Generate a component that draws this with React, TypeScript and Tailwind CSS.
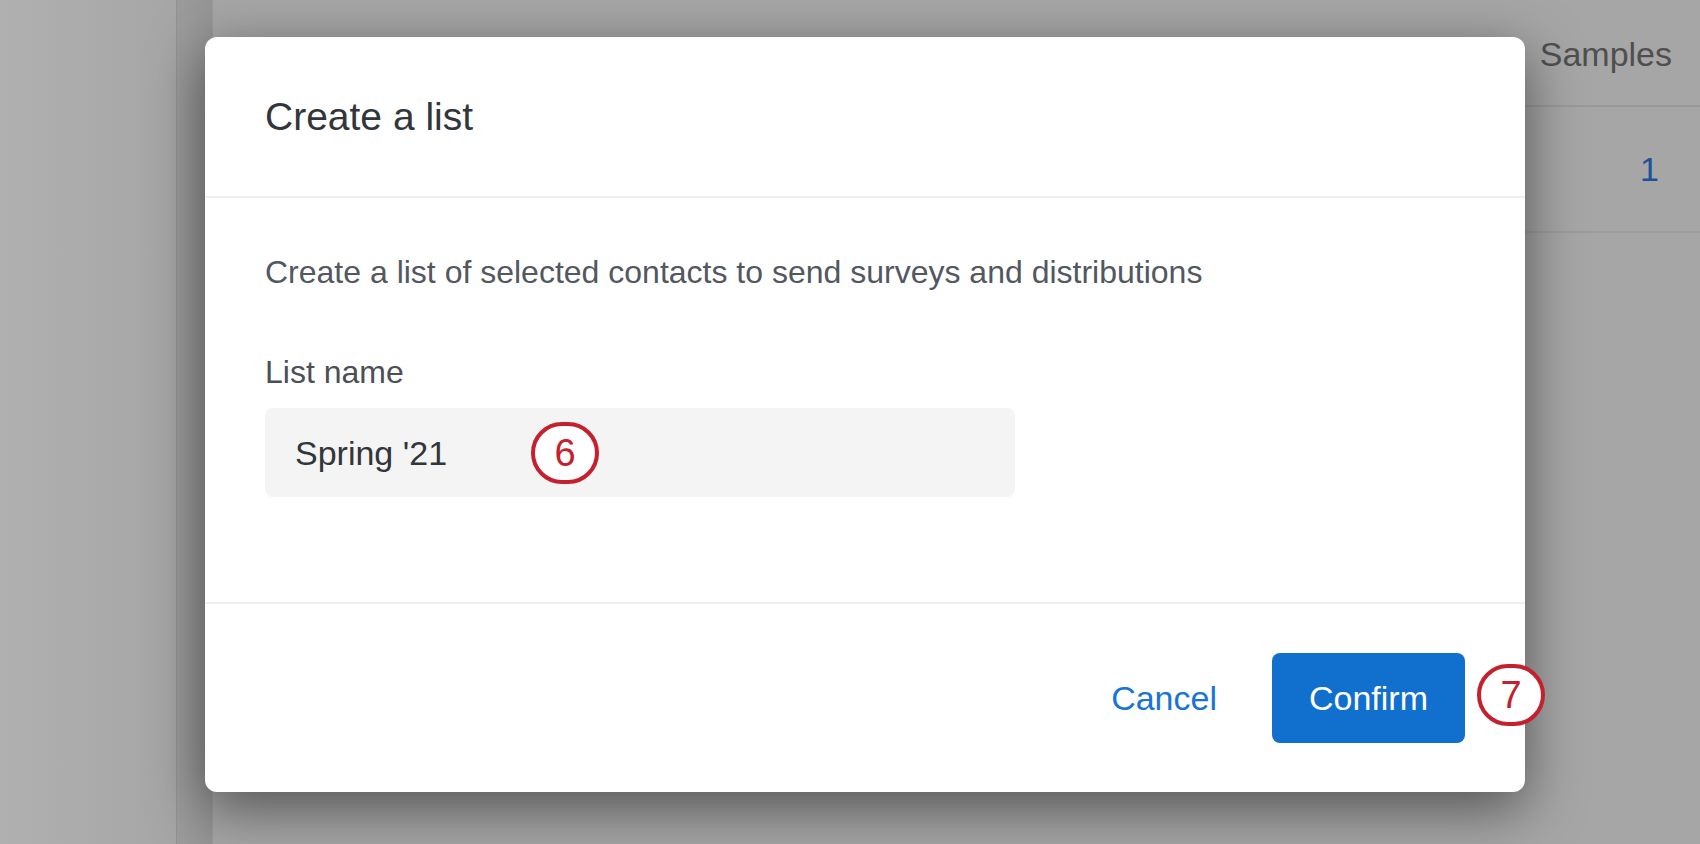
import React from "react";

function StepBadge({ n }: { n: number }) {
  return (
    <span className="flex items-center justify-center w-[68px] h-[62px] rounded-full border-[4px] border-[#c4202e] bg-white text-[#c4202e] text-[38px] leading-none">
      {n}
    </span>
  );
}

export default function App() {
  return (
    <div
      className="relative w-[1700px] h-[844px] overflow-hidden bg-[#a6a6a6]"
      style={{ fontFamily: '"Liberation Sans", Arial, sans-serif' }}
    >
      {/* dimmed page behind the dialog */}
      <div className="flex h-full">
        <div className="w-[177px] h-full bg-gradient-to-r from-[#b0b0b0] to-[#a6a6a6] border-r border-[#929292]" />
        <div className="w-[36px] h-full bg-gradient-to-r from-[#9c9c9c] to-[#959595] border-r border-[#999999]" />
        <div className="flex-1 flex flex-col">
          <div className="h-[107px] flex justify-end items-start border-b-2 border-[#999999] pr-[28px] pt-[34px]">
            <span className="text-[34px] leading-[40px] text-[#4f4f4f]">Samples</span>
          </div>
          <div className="h-[126px] flex justify-end items-center border-b-2 border-[#9d9d9d] pr-[41px]">
            <span className="text-[34px] leading-[40px] text-[#1d5299]">1</span>
          </div>
        </div>
      </div>

      {/* dialog */}
      <div className="absolute left-[205px] top-[37px] w-[1320px] h-[755px] bg-white rounded-[12px] shadow-[0_16px_56px_rgba(0,0,0,0.5)] flex flex-col">
        <div className="h-[161px] flex items-center px-[60px] border-b-2 border-[#efefef]">
          <h2 className="text-[39px] leading-[48px] text-[#32363a]">Create a list</h2>
        </div>

        <div className="flex-1 px-[60px] pt-[54px]">
          <p className="text-[32px] leading-[40px] text-[#525760]">
            Create a list of selected contacts to send surveys and distributions
          </p>
          <label className="block mt-[60px] text-[32px] leading-[40px] text-[#4b4f56]">
            List name
          </label>
          <div className="mt-[16px] w-[750px] h-[89px] rounded-[8px] bg-[#f4f4f4] flex items-center pl-[30px]">
            <span className="text-[34px] leading-[40px] text-[#32363a]">Spring '21</span>
            <span className="ml-[84px]">
              <StepBadge n={6} />
            </span>
          </div>
        </div>

        <div className="h-[190px] border-t-2 border-[#efefef] flex items-center justify-end gap-[55px] pr-[60px]">
          <button className="text-[34px] leading-[40px] text-[#1a73d6]">Cancel</button>
          <div className="relative">
            <button className="w-[193px] h-[90px] rounded-[8px] bg-[#116fce] text-white text-[34px] leading-[40px]">
              Confirm
            </button>
            <span className="absolute left-[calc(100%+12px)] top-[11px]">
              <StepBadge n={7} />
            </span>
          </div>
        </div>
      </div>
    </div>
  );
}
